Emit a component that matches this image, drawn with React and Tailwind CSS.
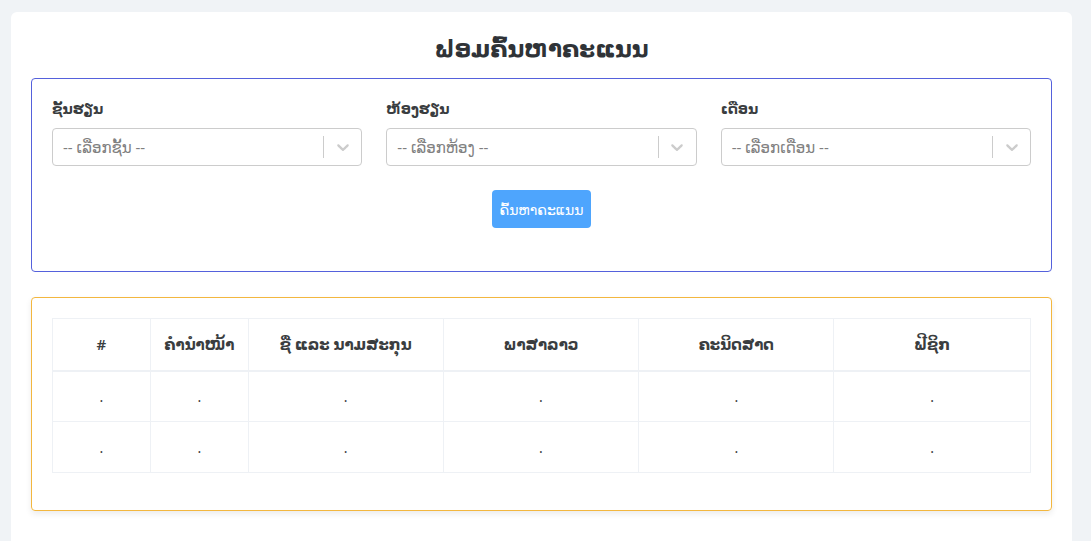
const fontStack = { fontFamily: '"Noto Sans", "DejaVu Sans", "Liberation Sans", sans-serif' };

const filters = [
  { label: 'ຊັ້ນຮຽນ', placeholder: '-- ເລືອກຊັ້ນ --' },
  { label: 'ຫ້ອງຮຽນ', placeholder: '-- ເລືອກຫ້ອງ --' },
  { label: 'ເດືອນ', placeholder: '-- ເລືອກເດືອນ --' },
];

const columns = [
  { title: '#', w: 'w-[98px]' },
  { title: 'ຄຳນຳໜ້າ', w: 'w-[98px]' },
  { title: 'ຊື່ ແລະ ນາມສະກຸນ', w: 'w-[195px]' },
  { title: 'ພາສາລາວ', w: 'w-[196px]' },
  { title: 'ຄະນິດສາດ', w: 'w-[195px]' },
  { title: 'ຟີຊິກ', w: 'w-[197px]' },
];

const rows = [0, 1];

const SelectBox = ({ placeholder }) => (
  <div className="flex h-[38px] items-center rounded-[4px] border border-[#cccccc] bg-white">
    <div className="flex-1 truncate pl-[10px] text-[15px] text-[#808080]">{placeholder}</div>
    <span className="h-[22px] w-px bg-[#cccccc]" />
    <div className="flex h-full w-[37px] items-center justify-center text-[#cccccc]">
      <svg width="20" height="20" viewBox="0 0 20 20" fill="currentColor">
        <path d="M4.516 7.548c0.436-0.446 1.043-0.481 1.576 0l3.908 3.747 3.908-3.747c0.533-0.481 1.141-0.446 1.574 0 0.436 0.445 0.408 1.197 0 1.615-0.406 0.418-4.695 4.502-4.695 4.502-0.217 0.223-0.502 0.335-0.787 0.335s-0.57-0.112-0.789-0.335c0 0-4.287-4.084-4.695-4.502s-0.436-1.17 0-1.615z" />
      </svg>
    </div>
  </div>
);

export default function App() {
  return (
    <div className="min-h-[541px] bg-[#f0f3f6] pl-[11px] pr-[19px] pt-[12px]" style={fontStack}>
      <div className="min-h-[529px] rounded-t-[6px] bg-white px-5 pt-5">
        <h1 className="mb-[14px] text-center text-[23px] font-bold leading-8 text-[#2f3337]">
          ຟອມຄົ້ນຫາຄະແນນ
        </h1>

        <div className="rounded-[4px] border border-[#5561dc] px-5 pb-[43px] pt-5">
          <div className="grid grid-cols-3 gap-6">
            {filters.map((f) => (
              <div key={f.label}>
                <label className="mb-[9px] block text-[14px] font-semibold leading-5 text-[#3a3d40]">
                  {f.label}
                </label>
                <SelectBox placeholder={f.placeholder} />
              </div>
            ))}
          </div>
          <div className="mt-6 flex justify-center">
            <button className="h-[38px] w-[99px] rounded-[4px] bg-[#4ea5fd] text-[14px] text-white">
              ຄົ້ນຫາຄະແນນ
            </button>
          </div>
        </div>

        <div className="mt-[25px] rounded-[4px] border border-[#f3b73f] px-5 pb-[37px] pt-5 shadow-[0_3px_6px_rgba(0,0,0,0.08)]">
          <table className="w-full border-collapse text-[#3a3d40]">
            <thead>
              <tr className="h-[52px] border-b-2 border-[#eef1f5]">
                {columns.map((c) => (
                  <th
                    key={c.title}
                    className={`${c.w} border border-b-2 border-[#eef1f5] text-center text-[15px] font-semibold`}
                  >
                    {c.title}
                  </th>
                ))}
              </tr>
            </thead>
            <tbody>
              {rows.map((r) => (
                <tr key={r} className="h-[51px]">
                  {columns.map((c) => (
                    <td key={c.title} className="border border-[#eef1f5] text-center text-[14px]">
                      .
                    </td>
                  ))}
                </tr>
              ))}
            </tbody>
          </table>
        </div>
      </div>
    </div>
  );
}
